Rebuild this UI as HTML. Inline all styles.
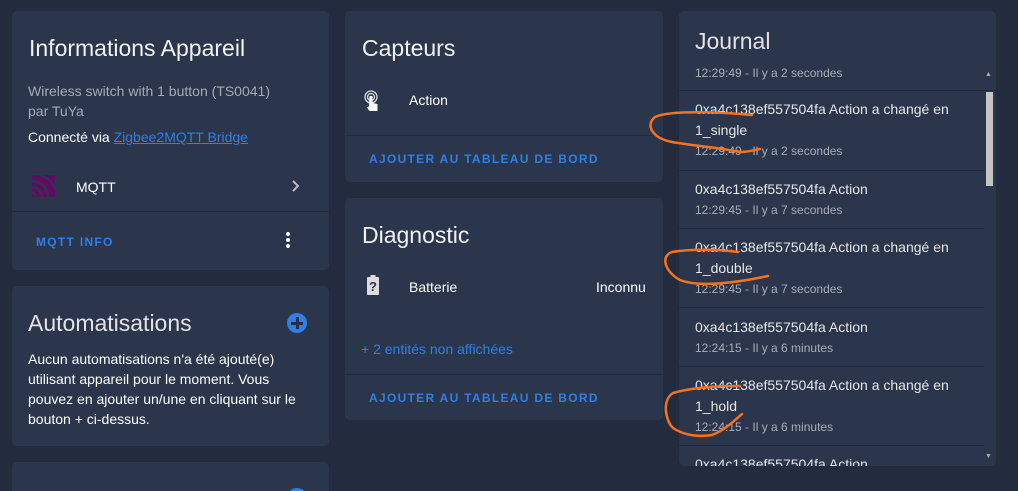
<!DOCTYPE html>
<html><head><meta charset="utf-8"><style>
*{margin:0;padding:0;box-sizing:border-box}
html,body{width:1018px;height:491px;overflow:hidden}
body{background:#232c3e;font-family:"Liberation Sans",Arial,sans-serif;position:relative;color:#e1e1e1}
.card{position:absolute;background:#2b364c;border-radius:5px;overflow:hidden}
.t{position:absolute;white-space:nowrap}
.h{font-size:23px;color:#f2f2f2}
.btn{font-size:12px;font-weight:bold;letter-spacing:1.3px;color:#2f7fe6}
.sep{position:absolute;left:0;right:0;height:1px;background:#222b3b}
.jt{font-size:14px;color:#e6e6e6}
.js{font-size:12px;color:#a8aeb8}
</style></head><body>

<div class="card" style="left:12px;top:11px;width:317px;height:259px">
 <div class="t h" style="left:17px;top:24px">Informations Appareil</div>
 <div class="t" style="left:16px;top:70px;font-size:14px;color:#a4abb6;line-height:20px">Wireless switch with 1 button (TS0041)<br>par TuYa</div>
 <div class="t" style="left:16px;top:118px;font-size:14px;color:#fff">Connecté via <span style="color:#2f7fe6;text-decoration:underline">Zigbee2MQTT Bridge</span></div>
 <svg class="t" style="left:20px;top:164px" width="24" height="24" viewBox="0 0 24 24"><rect x="0" y="0" width="23" height="22" fill="#5f0a63"/><path d="M0 6 A16 16 0 0 1 16 22 M0 12 A10 10 0 0 1 10 22 M0 18 A4 4 0 0 1 4 22" stroke="#2b364c" stroke-width="2.5" fill="none"/><path d="M8 0 A22 22 0 0 1 23 14" stroke="#2b364c" stroke-width="2" fill="none"/></svg>
 <div class="t" style="left:64px;top:168px;font-size:14px;color:#fff">MQTT</div>
 <svg class="t" style="left:278px;top:168px" width="12" height="14"><path d="M3 2 L8 7 L3 12" stroke="#bbb" stroke-width="2" fill="none"/></svg>
 <div class="sep" style="top:200px"></div>
 <div class="t btn" style="left:24px;top:224px">MQTT INFO</div>
 <div class="t" style="left:274px;top:221px;width:4px"><div style="width:4px;height:4px;border-radius:2px;background:#fff;margin-bottom:2px"></div><div style="width:4px;height:4px;border-radius:2px;background:#fff;margin-bottom:2px"></div><div style="width:4px;height:4px;border-radius:2px;background:#fff"></div></div>
</div>

<div class="card" style="left:12px;top:286px;width:317px;height:160px">
 <div class="t h" style="left:16px;top:24px;color:#e3e3e3">Automatisations</div>
 <div class="t" style="left:275px;top:27px;width:20px;height:20px;border-radius:10px;background:#2f7fe6"><div style="position:absolute;left:4px;top:9px;width:12px;height:2.5px;background:#23304a"></div><div style="position:absolute;left:9px;top:4px;width:2.5px;height:12px;background:#23304a"></div></div>
 <div class="t" style="left:16px;top:63px;font-size:14px;color:#fff;line-height:20px">Aucun automatisations n'a été ajouté(e)<br>utilisant appareil pour le moment. Vous<br>pouvez en ajouter un/une en cliquant sur le<br>bouton + ci-dessus.</div>
</div>

<div class="card" style="left:12px;top:462px;width:317px;height:40px">
 <div class="t h" style="left:16px;top:26px">Scènes</div>
 <div class="t" style="left:275px;top:26px;width:20px;height:20px;border-radius:10px;background:#2f7fe6"></div>
</div>

<div class="card" style="left:345px;top:11px;width:318px;height:171px">
 <div class="t h" style="left:17px;top:24px">Capteurs</div>
 <svg class="t" style="left:17px;top:78px" width="20" height="24" viewBox="0 0 20 24"><circle cx="9" cy="8" r="6" stroke="#ddd" stroke-width="1.3" fill="none"/><circle cx="9" cy="8" r="3.5" stroke="#ddd" stroke-width="1.3" fill="none"/><path d="M7.5 7 h3 v7 l5 1 v7 h-8 l-3 -4 l2.5 -0.5 z" fill="#fff"/></svg>
 <div class="t" style="left:64px;top:81px;font-size:14px;color:#fff">Action</div>
 <div class="sep" style="top:124px"></div>
 <div class="t btn" style="left:24px;top:141px">AJOUTER AU TABLEAU DE BORD</div>
</div>

<div class="card" style="left:345px;top:198px;width:318px;height:222px">
 <div class="t h" style="left:17px;top:24px">Diagnostic</div>
 <svg class="t" style="left:22px;top:77px" width="12" height="20" viewBox="0 0 12 20"><rect x="3.5" y="0" width="5" height="2" fill="#ddd"/><rect x="0" y="2" width="12" height="18" rx="1" fill="#ddd"/><text x="6" y="16" font-size="13" font-weight="bold" text-anchor="middle" fill="#2b364c" font-family="Liberation Sans">?</text></svg>
 <div class="t" style="left:64px;top:81px;font-size:14px;color:#fff">Batterie</div>
 <div class="t" style="left:251px;top:81px;font-size:14px;color:#fff">Inconnu</div>
 <div class="t" style="left:16px;top:143px;font-size:14px;color:#2f7fe6">+ 2 entités non affichées</div>
 <div class="sep" style="top:176px"></div>
 <div class="t btn" style="left:24px;top:193px">AJOUTER AU TABLEAU DE BORD</div>
</div>

<div class="card" style="left:679px;top:11px;width:317px;height:455px">
 <div class="t h" style="left:16px;top:17px;color:#e3e3e3">Journal</div>
 <div class="t js" style="left:16px;top:55px">12:29:49 - Il y a 2 secondes</div>
 <div class="sep" style="top:79px;right:0"></div>
 <div class="t" style="left:306px;top:60px;font-size:7px;color:#aaa">▲</div>
 <div class="t" style="left:307px;top:81px;width:7px;height:94px;background:#c5c5c5"></div>
 <div class="t" style="left:306px;top:442px;font-size:7px;color:#aaa">▼</div>
 <div class="t jt" style="left:16px;top:90px">0xa4c138ef557504fa Action a changé en</div>
 <div class="t jt" style="left:16px;top:111px">1_single</div>
 <div class="t js" style="left:16px;top:133px">12:29:49 - Il y a 2 secondes</div>
 <div class="sep" style="top:159px;right:12px"></div>
 <div class="t jt" style="left:16px;top:170px">0xa4c138ef557504fa Action</div>
 <div class="t js" style="left:16px;top:192px">12:29:45 - Il y a 7 secondes</div>
 <div class="sep" style="top:217px;right:12px"></div>
 <div class="t jt" style="left:16px;top:228px">0xa4c138ef557504fa Action a changé en</div>
 <div class="t jt" style="left:16px;top:249px">1_double</div>
 <div class="t js" style="left:16px;top:271px">12:29:45 - Il y a 7 secondes</div>
 <div class="sep" style="top:296px;right:12px"></div>
 <div class="t jt" style="left:16px;top:308px">0xa4c138ef557504fa Action</div>
 <div class="t js" style="left:16px;top:330px">12:24:15 - Il y a 6 minutes</div>
 <div class="sep" style="top:355px;right:12px"></div>
 <div class="t jt" style="left:16px;top:366px">0xa4c138ef557504fa Action a changé en</div>
 <div class="t jt" style="left:16px;top:387px">1_hold</div>
 <div class="t js" style="left:16px;top:409px">12:24:15 - Il y a 6 minutes</div>
 <div class="sep" style="top:434px;right:12px"></div>
 <div class="t jt" style="left:16px;top:445px">0xa4c138ef557504fa Action</div>
</div>

<svg style="position:absolute;left:0;top:0" width="1018" height="491">
 <g stroke="#f5731f" stroke-width="2.5" fill="none" stroke-linecap="round">
  <path d="M752 115 C720 112 670 110 655 117 C645 125 652 138 672 142 C695 146 715 147 740 152 C748 152 755 150 760 149"/>
  <path d="M738 252 C715 249 690 249 672 252 C660 256 665 272 680 280 C700 288 740 282 768 276"/>
  <path d="M740 386 C715 386 690 388 673 393 C662 400 665 420 673 428 C685 436 700 437 712 435 C725 430 735 420 742 414"/>
 </g>
</svg>
</body></html>
